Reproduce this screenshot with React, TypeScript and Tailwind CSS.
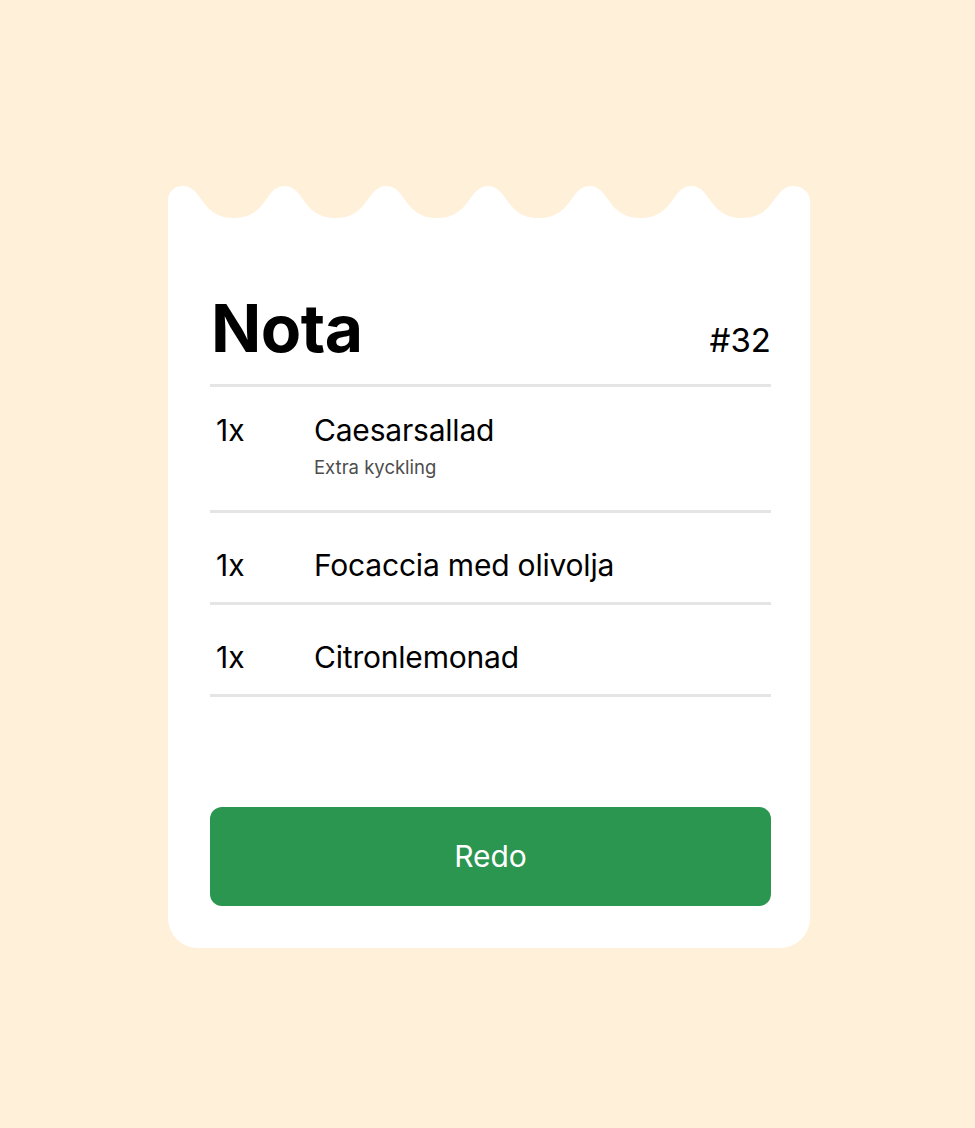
import React from 'react';

const items = [
    { qty: '1x', name: 'Caesarsallad', note: 'Extra kyckling' },
    { qty: '1x', name: 'Focaccia med olivolja' },
    { qty: '1x', name: 'Citronlemonad' },
];

// scalloped top edge of the receipt
function waveEdge() {
    const w = 642;
    const first = 15;
    const period = (625 - first) / 6;
    let d = `M0,33 L0,15 C0,6 6,0 ${first},0`;
    for (let k = 0; k < 6; k++) {
        const cx = first + k * period;
        const tx = cx + period / 2;
        const nx = cx + period;
        d += ` C${cx + 20},0 ${cx + 17},32 ${tx},32`;
        d += ` C${nx - 17},32 ${nx - 20},0 ${nx},0`;
    }
    d += ` C634,0 ${w},6 ${w},15 L${w},33 Z`;
    return d;
}

export default function App() {
    return (
        <div className="min-h-[1128px] bg-[#fff0da] flex justify-center items-start pt-[186px] pl-[3px] font-['Inter',sans-serif] text-black">
            <div className="w-[642px]">
                <svg width="642" height="33" viewBox="0 0 642 33" className="block -mb-px">
                    <path d={waveEdge()} fill="#ffffff" />
                </svg>
                <div className="bg-white rounded-b-[30px] pt-[77px] pl-[42px] pr-[39px] pb-[42px]">
                    {/* Header */}
                    <div className="flex items-baseline justify-between pb-[23px] border-b-[3px] border-[#e5e5e5]">
                        <h1 className="text-[66px] leading-none font-bold tracking-[-0.5px] ml-[1px]">Nota</h1>
                        <span className="text-[33px] leading-none">#32</span>
                    </div>

                    {/* Items */}
                    {items.map((item, i) => (
                        <div
                            key={item.name}
                            className={`flex border-b-[3px] border-[#e5e5e5] ${i === 0 ? 'pt-[25px] pb-[31px]' : 'pt-[34px] pb-[19px]'}`}
                        >
                            <div className="w-[104px] pl-[6px] text-[30px] leading-[36px]">{item.qty}</div>
                            <div>
                                <div className="text-[30px] leading-[36px] tracking-[-0.2px]">{item.name}</div>
                                {item.note && (
                                    <div className="mt-[7px] text-[18.5px] leading-[24px] text-[#4d4d4d]">{item.note}</div>
                                )}
                            </div>
                        </div>
                    ))}

                    <button className="mt-[110px] w-full h-[99px] rounded-[12px] bg-[#2a9650] text-white text-[30px]">
                        Redo
                    </button>
                </div>
            </div>
        </div>
    );
}
